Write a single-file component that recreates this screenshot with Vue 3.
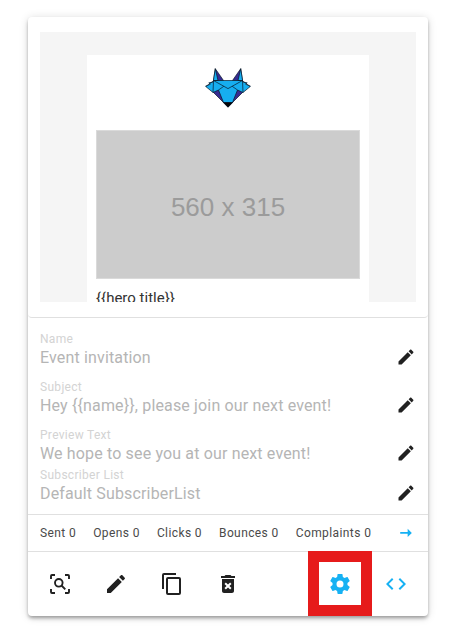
<script setup>
const pencil = 'M20.71,7.04C21.1,6.65 21.1,6 20.71,5.63L18.37,3.29C18,2.9 17.35,2.9 16.96,3.29L15.12,5.12L18.87,8.87M3,17.25V21H6.75L17.81,9.93L14.06,6.18L3,17.25Z'
const fields = [
  { label: 'Name', value: 'Event invitation' },
  { label: 'Subject', value: 'Hey {{name}}, please join our next event!' },
  { label: 'Preview Text', value: 'We hope to see you at our next event!' },
  { label: 'Subscriber List', value: 'Default SubscriberList' },
]
const stats = ['Sent 0', 'Opens 0', 'Clicks 0', 'Bounces 0', 'Complaints 0']
const heroTitle = '{{hero title}}'
</script>

<template>
  <main class="page">
    <article class="card">
      <section class="preview">
        <div class="canvas">
          <div class="email">
            <svg class="fox" viewBox="0 0 46 40" stroke="#08182a" stroke-width=".7" stroke-linejoin="round">
              <path fill="#382b91" d="M10.3.7 18.5 12.5H8.5ZM35.7.7 27.5 12.5h10ZM8 24 23 39 38 24 31 20H15Z" />
              <path fill="#16aef0" d="M10.3.7 13 12.5H8.4ZM35.7.7 33 12.5h4.6ZM8.5 12.5h29l.5 1.5 4.2.8-1.4 1.5 4.7 2L38 24.5 32.5 22 27.5 34.5h-9L13.5 22 8 24.5.5 18.3l4.7-2-1.4-1.5 4.2-.8Z" />
              <path class="crease" d="M8.5 12.5 23 20.6l14.5-8.1M13.5 22l5.3-3.7M32.5 22l-5.3-3.7M1 18.3l7.3-5.2M45 18.3l-7.3-5.2M8.5 12.5 8 24.5M37.5 12.5l.5 12" />
              <path fill="#050505" d="M18.3 34.5h9.4L23 39.3Z" />
            </svg>
            <div class="placeholder">560 x 315</div>
            <div class="hero">{{ heroTitle }}</div>
          </div>
        </div>
      </section>
      <section class="fields">
        <div v-for="field in fields" :key="field.label" class="field">
          <div class="copy">
            <div class="label">{{ field.label }}</div>
            <div class="value">{{ field.value }}</div>
          </div>
          <svg class="edit" viewBox="0 0 24 24"><path :d="pencil" /></svg>
        </div>
      </section>
      <section class="stats">
        <span v-for="stat in stats" :key="stat">{{ stat }}</span>
        <svg class="arrow" viewBox="0 0 24 24"><path d="M14 16.94V12.94H5.08L5.05 10.93H14V6.94L19 11.94Z" /></svg>
      </section>
      <footer class="actions">
        <button class="action" aria-label="Preview">
          <svg class="outline" viewBox="0 0 24 24">
            <path d="M3 7V4q0-1 1-1h3M17 3h3q1 0 1 1v3M21 17v3q0 1-1 1h-3M7 21H4q-1 0-1-1v-3" />
            <circle cx="10.8" cy="10.8" r="3.8" /><path d="m13.5 13.5 3.8 3.8" />
          </svg>
        </button>
        <button class="action" aria-label="Edit"><svg viewBox="0 0 24 24"><path :d="pencil" /></svg></button>
        <button class="action" aria-label="Duplicate">
          <svg viewBox="0 0 24 24"><path d="M19,21H8V7H19M19,5H8A2,2 0 0,0 6,7V21A2,2 0 0,0 8,23H19A2,2 0 0,0 21,21V7A2,2 0 0,0 19,5M16,1H4A2,2 0 0,0 2,3V17H4V3H16V1Z" /></svg>
        </button>
        <button class="action" aria-label="Delete">
          <svg viewBox="0 0 24 24"><path d="M6 19c0 1.1.9 2 2 2h8c1.1 0 2-.9 2-2V7H6v12zm2.46-7.12 1.41-1.41L12 12.59l2.12-2.12 1.41 1.41L13.41 14l2.12 2.12-1.41 1.41L12 15.41l-2.12 2.12-1.41-1.41L10.59 14l-2.13-2.12zM15.5 4l-1-1h-5l-1 1H5v2h14V4z" /></svg>
        </button>
        <button class="action marked" aria-label="Settings">
          <svg viewBox="0 0 24 24"><path d="M12,15.5A3.5,3.5 0 0,1 8.5,12A3.5,3.5 0 0,1 12,8.5A3.5,3.5 0 0,1 15.5,12A3.5,3.5 0 0,1 12,15.5M19.43,12.97C19.47,12.65 19.5,12.33 19.5,12C19.5,11.67 19.47,11.34 19.43,11L21.54,9.37C21.73,9.22 21.78,8.95 21.66,8.73L19.66,5.27C19.54,5.05 19.27,4.96 19.05,5.05L16.56,6.05C16.04,5.66 15.5,5.32 14.87,5.07L14.5,2.42C14.46,2.18 14.25,2 14,2H10C9.75,2 9.54,2.18 9.5,2.42L9.13,5.07C8.5,5.32 7.96,5.66 7.44,6.05L4.95,5.05C4.73,4.96 4.46,5.05 4.34,5.27L2.34,8.73C2.21,8.95 2.27,9.22 2.46,9.37L4.57,11C4.53,11.34 4.5,11.67 4.5,12C4.5,12.33 4.53,12.65 4.57,12.97L2.46,14.63C2.27,14.78 2.21,15.05 2.34,15.27L4.34,18.73C4.46,18.95 4.73,19.03 4.95,18.95L7.44,17.94C7.96,18.34 8.5,18.68 9.13,18.93L9.5,21.58C9.54,21.82 9.75,22 10,22H14C14.25,22 14.46,21.82 14.5,21.58L14.87,18.93C15.5,18.67 16.04,18.34 16.56,17.94L19.05,18.95C19.27,19.03 19.54,18.95 19.66,18.73L21.66,15.27C21.78,15.05 21.73,14.78 21.54,14.63L19.43,12.97Z" /></svg>
        </button>
        <button class="action code" aria-label="View code">
          <svg viewBox="0 0 24 24"><path d="M14.6,16.6L19.2,12L14.6,7.4L16,6L22,12L16,18L14.6,16.6M9.4,16.6L4.8,12L9.4,7.4L8,6L2,12L8,18L9.4,16.6Z" /></svg>
        </button>
      </footer>
    </article>
  </main>
</template>

<style>
body { background: #fff; }
</style>

<style scoped>
.page { height: 640px; box-sizing: border-box; padding: 17px 27px 24px 28px; font-family: Roboto, sans-serif; color: #212121; overflow: hidden; }
.card { width: 400px; height: 599px; border-radius: 4px; background: #fff; box-shadow: 0 3px 4px -1px rgba(0,0,0,.25), 0 2px 3px rgba(0,0,0,.13), 0 1px 10px rgba(0,0,0,.14); }
svg { display: block; fill: currentColor; }
.preview { height: 301px; box-sizing: border-box; padding: 15px 12px; border-bottom: 1px solid #e0e0e0; border-radius: 4px; }
.canvas { height: 270px; box-sizing: border-box; background: #f5f5f5; padding: 23px 47px 0; overflow: hidden; }
.email { height: 247px; box-sizing: border-box; padding: 13px 9px 0; background: #fff; overflow: hidden; }
.fox { width: 46px; height: 40px; margin: 0 auto 22px; }
.crease { fill: none; }
.placeholder { height: 149px; box-sizing: border-box; padding-top: 5px; border: 1px solid #dadada; background: #ccc; display: flex; align-items: center; justify-content: center; font: 26px "Liberation Sans", sans-serif; color: #9b9b9b; }
.hero { margin-top: 9px; font-size: 15px; line-height: 20px; color: #333; }
.fields { padding: 12px 12px 0; height: 196px; box-sizing: border-box; }
.field { height: 48px; display: flex; justify-content: space-between; }
.field:nth-child(3) { height: 40px; }
.label { height: 18px; font-size: 12px; line-height: 18px; letter-spacing: .3px; color: #d3d3d3; }
.value { font-size: 16px; line-height: 19px; letter-spacing: .15px; color: #b5b5b5; white-space: nowrap; }
.edit { width: 20px; height: 20px; margin-top: 17px; }
.stats { height: 38px; box-sizing: border-box; border: solid #e0e0e0; border-width: 1px 0; padding: 0 12px; display: flex; align-items: center; gap: 17px; font-size: 12px; letter-spacing: .4px; color: #4a4a4a; white-space: nowrap; }
.arrow { width: 20px; height: 20px; margin-left: auto; color: #16b1f3; }
.actions { height: 64px; display: flex; padding-left: 4px; }
.action { appearance: none; width: 56px; height: 64px; padding: 0; border: 0; background: transparent; color: #212121; display: flex; align-items: center; justify-content: center; }
.action svg { width: 24px; height: 24px; flex: none; }
.action .outline { fill: none; stroke: currentColor; stroke-width: 1.9; }
.marked { width: 64px; height: 65px; margin: -1px 0 0 52px; padding-top: 1px; border: 11px solid #e61b1b; box-sizing: border-box; color: #16b1f3; }
.code { width: 48px; color: #16b1f3; }
</style>
